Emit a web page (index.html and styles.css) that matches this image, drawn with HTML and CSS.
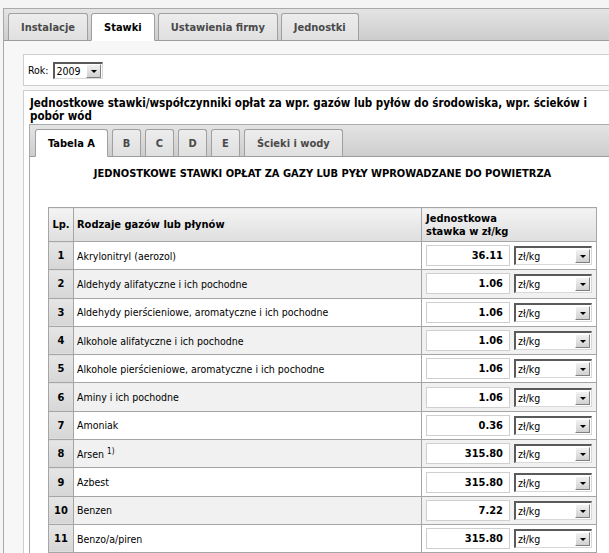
FILE: index.html
```html
<!DOCTYPE html>
<html lang="pl">
<head>
<meta charset="utf-8">
<title>Stawki</title>
<link rel="stylesheet" href="styles.css">
</head>
<body>
<div class="app">
  <div class="tabbar top">
    <div class="tab">Instalacje</div>
    <div class="tab active">Stawki</div>
    <div class="tab">Ustawienia firmy</div>
    <div class="tab">Jednostki</div>
  </div>
  <div class="panel">
    <div class="box rok">
      <span class="rok-label">Rok:</span>
      <div class="combo year"><span class="combo-text">2009</span><span class="combo-btn"></span></div>
    </div>
    <div class="box rates">
      <div class="heading">Jednostkowe stawki/współczynniki opłat za wpr. gazów lub pyłów do środowiska, wpr. ścieków i pobór wód</div>
      <div class="inner">
        <div class="tabbar sub">
          <div class="tab active">Tabela A</div>
          <div class="tab letter">B</div>
          <div class="tab letter">C</div>
          <div class="tab letter">D</div>
          <div class="tab letter">E</div>
          <div class="tab">Ścieki i wody</div>
        </div>
        <div class="inner-panel">
          <div class="title">JEDNOSTKOWE STAWKI OPŁAT ZA GAZY LUB PYŁY WPROWADZANE DO POWIETRZA</div>
          <table class="rates-table">
            <thead>
              <tr>
                <th class="lp">Lp.</th>
                <th class="name">Rodzaje gazów lub płynów</th>
                <th class="rate">Jednostkowa<br>stawka w zł/kg</th>
              </tr>
            </thead>
            <tbody>
              <tr><td class="lp">1</td><td class="name">Akrylonitryl (aerozol)</td><td class="rate"><div class="cell-row"><div class="value">36.11</div><div class="combo unit"><span class="combo-text">zł/kg</span><span class="combo-btn"></span></div></div></td></tr>
              <tr><td class="lp">2</td><td class="name">Aldehydy alifatyczne i ich pochodne</td><td class="rate"><div class="cell-row"><div class="value">1.06</div><div class="combo unit"><span class="combo-text">zł/kg</span><span class="combo-btn"></span></div></div></td></tr>
              <tr><td class="lp">3</td><td class="name">Aldehydy pierścieniowe, aromatyczne i ich pochodne</td><td class="rate"><div class="cell-row"><div class="value">1.06</div><div class="combo unit"><span class="combo-text">zł/kg</span><span class="combo-btn"></span></div></div></td></tr>
              <tr><td class="lp">4</td><td class="name">Alkohole alifatyczne i ich pochodne</td><td class="rate"><div class="cell-row"><div class="value">1.06</div><div class="combo unit"><span class="combo-text">zł/kg</span><span class="combo-btn"></span></div></div></td></tr>
              <tr><td class="lp">5</td><td class="name">Alkohole pierścieniowe, aromatyczne i ich pochodne</td><td class="rate"><div class="cell-row"><div class="value">1.06</div><div class="combo unit"><span class="combo-text">zł/kg</span><span class="combo-btn"></span></div></div></td></tr>
              <tr><td class="lp">6</td><td class="name">Aminy i ich pochodne</td><td class="rate"><div class="cell-row"><div class="value">1.06</div><div class="combo unit"><span class="combo-text">zł/kg</span><span class="combo-btn"></span></div></div></td></tr>
              <tr><td class="lp">7</td><td class="name">Amoniak</td><td class="rate"><div class="cell-row"><div class="value">0.36</div><div class="combo unit"><span class="combo-text">zł/kg</span><span class="combo-btn"></span></div></div></td></tr>
              <tr><td class="lp">8</td><td class="name">Arsen <sup>1)</sup></td><td class="rate"><div class="cell-row"><div class="value">315.80</div><div class="combo unit"><span class="combo-text">zł/kg</span><span class="combo-btn"></span></div></div></td></tr>
              <tr><td class="lp">9</td><td class="name">Azbest</td><td class="rate"><div class="cell-row"><div class="value">315.80</div><div class="combo unit"><span class="combo-text">zł/kg</span><span class="combo-btn"></span></div></div></td></tr>
              <tr><td class="lp">10</td><td class="name">Benzen</td><td class="rate"><div class="cell-row"><div class="value">7.22</div><div class="combo unit"><span class="combo-text">zł/kg</span><span class="combo-btn"></span></div></div></td></tr>
              <tr><td class="lp">11</td><td class="name">Benzo/a/piren</td><td class="rate"><div class="cell-row"><div class="value">315.80</div><div class="combo unit"><span class="combo-text">zł/kg</span><span class="combo-btn"></span></div></div></td></tr>
            </tbody>
          </table>
        </div>
      </div>
    </div>
  </div>
</div>
</body>
</html>
```

FILE: styles.css
```css
html, body {
  margin: 0;
  padding: 0;
}
body {
  background: #f4f4f4;
  overflow: hidden;
  font-family: "DejaVu Sans Condensed", "DejaVu Sans", sans-serif;
  font-size: 10.5px;
  color: #000;
}
.app {
  margin: 8px 0 0 3px;
  width: 612px;
  border-left: 1px solid #a9a9a9;
  border-top: 1px solid #a9a9a9;
  background: #f7f7f7;
}

/* tab bars */
.tabbar {
  display: flex;
  align-items: flex-end;
  gap: 3px;
  background: linear-gradient(#e4e4e4, #cdcdcd);
  border-bottom: 1px solid #9c9c9c;
}
.tabbar.top {
  height: 31px;
  padding-left: 4px;
}
.tabbar.sub {
  height: 31px;
  padding-left: 5px;
  gap: 4px;
}
.tab {
  box-sizing: border-box;
  height: 28px;
  margin-bottom: -1px;
  padding: 0 12px;
  display: flex;
  align-items: center;
  justify-content: center;
  border: 1px solid #a0a0a0;
  border-radius: 3px 3px 0 0;
  background: linear-gradient(#ededed, #e0e0e0);
  color: #4a4a4a;
  font-size: 11px;
  font-weight: bold;
  border-bottom: 1px solid #9c9c9c;
}
.tab.active {
  background: #fff;
  color: #000;
  border-bottom-color: #fff;
}
.tab.letter {
  width: 29px;
  padding: 0;
}

/* panel */
.panel {
  padding: 13px 0 0 19px;
}
.box {
  background: #fff;
  border: 1px solid #cfcfcf;
}
.box.rok {
  height: 30px;
  display: flex;
  align-items: center;
  padding-left: 4px;
}
.rok-label {
  margin-right: 4px;
}

/* combo boxes */
.combo {
  box-sizing: border-box;
  display: flex;
  align-items: center;
  background: #fff;
  border-top: 2px solid #5a5a5a;
  border-left: 2px solid #5a5a5a;
  border-right: 1px solid #d8d8d8;
  border-bottom: 1px solid #d8d8d8;
}
.combo-text {
  flex: 1;
  padding-left: 2px;
  white-space: nowrap;
}
.combo-btn {
  position: relative;
  box-sizing: border-box;
  width: 15px;
  height: 14px;
  margin-right: 1px;
  background: linear-gradient(#f2f2f2, #d0d0d0);
  border: 1px solid #fff;
  border-right-color: #808080;
  border-bottom-color: #808080;
}
.combo-btn::after {
  content: "";
  position: absolute;
  left: 4px;
  top: 5px;
  border-left: 3px solid transparent;
  border-right: 3px solid transparent;
  border-top: 3px solid #000;
}
.combo.year {
  width: 50px;
  height: 17px;
}
.combo.unit {
  width: 78px;
  height: 19px;
}

.box.rates {
  margin-top: 4px;
}
.heading {
  font-weight: bold;
  font-size: 11.5px;
  line-height: 13px;
  max-width: 560px;
  padding: 6px 6px 1px 6px;
}
.inner {
  margin-left: 5px;
  border-left: 1px solid #a9a9a9;
  border-top: 1px solid #a9a9a9;
}
.inner-panel {
  background: #fff;
  padding: 10px 18px 0 18px;
}
.title {
  text-align: center;
  font-size: 11px;
  font-weight: bold;
  line-height: 13px;
  margin-bottom: 27px;
}

/* table */
.rates-table {
  width: 549px;
  border-collapse: collapse;
  border: 1px solid #999;
}
.rates-table th,
.rates-table td {
  border: 1px solid #a5a5a5;
  padding: 0;
  text-align: left;
}
.rates-table th {
  height: 33px;
  font-size: 11px;
  font-weight: bold;
  background: linear-gradient(#f4f4f4, #dedede);
  vertical-align: middle;
}
.rates-table th.lp,
.rates-table td.lp {
  width: 24px;
  text-align: center;
}
.rates-table th.name,
.rates-table td.name {
  padding-left: 3px;
}
.rates-table th.rate {
  width: 170px;
  padding-left: 4px;
  line-height: 13px;
}
.rates-table td {
  height: 27.3px;
}
.rates-table td.lp {
  font-size: 11px;
  font-weight: bold;
  background: linear-gradient(#e6e6e6, #d6d6d6);
}
.rates-table tbody tr:nth-child(even) td.name,
.rates-table tbody tr:nth-child(even) td.rate {
  background: #f1f1f1;
}
.rates-table td.rate {
  padding: 0 4px 0 4px;
}
.rates-table sup {
  font-size: 8px;
  vertical-align: 4px;
  line-height: 0;
}
.cell-row {
  display: flex;
  align-items: center;
  gap: 4px;
}
.value {
  box-sizing: border-box;
  width: 84px;
  height: 21px;
  border: 1px solid #cfcfcf;
  background: #fff;
  font-size: 11px;
  font-weight: bold;
  text-align: right;
  padding-right: 6px;
  line-height: 19px;
}
```
